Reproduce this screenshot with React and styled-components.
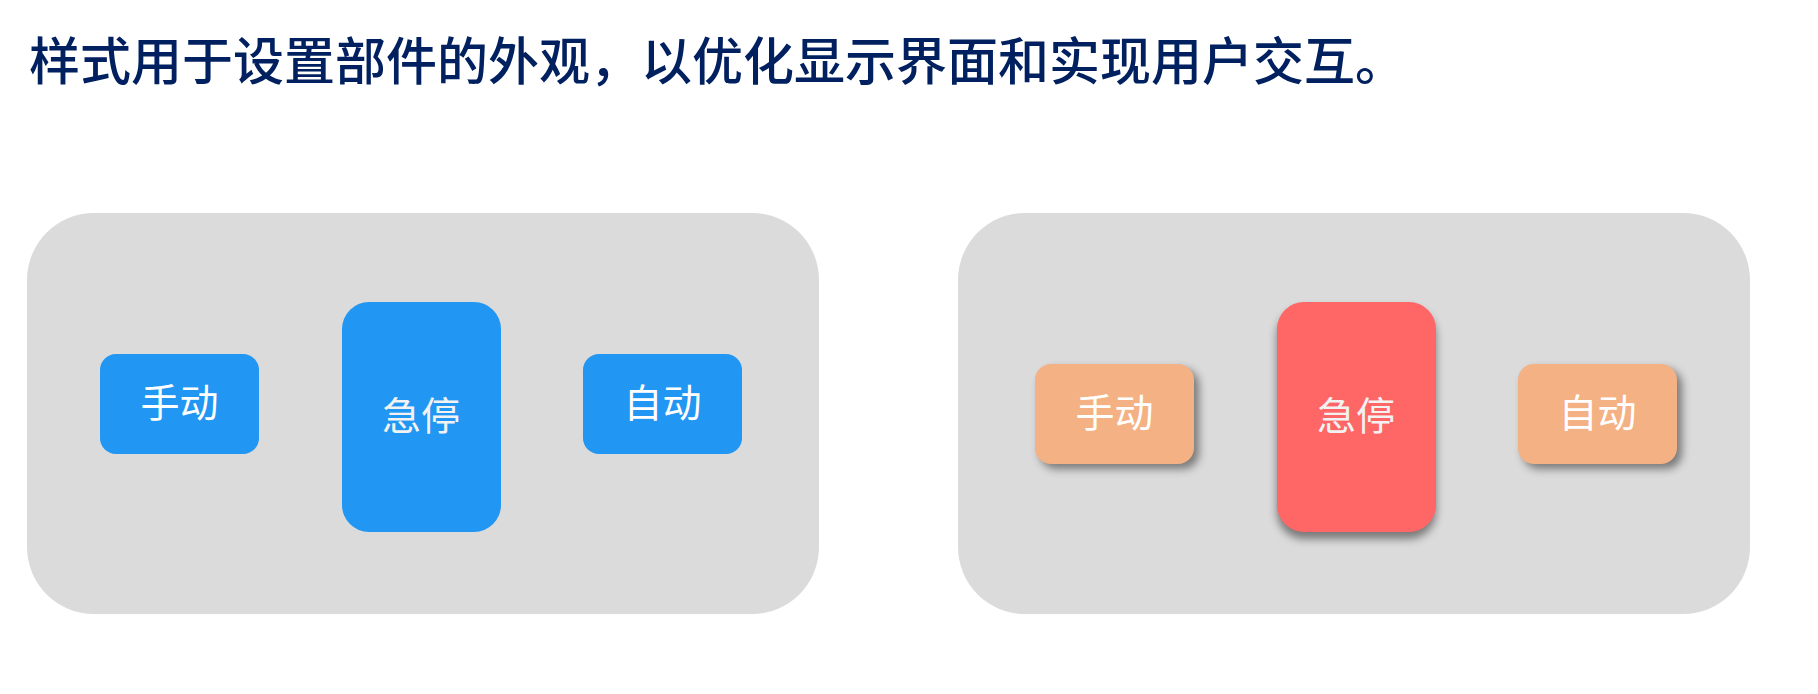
import React from "react";
import styled, { createGlobalStyle } from "styled-components";

const GlobalStyle = createGlobalStyle`
  * {
    box-sizing: border-box;
  }

  body {
    margin: 0;
    background: #ffffff;
    font-family: "Noto Sans CJK SC", sans-serif;
  }
`;

const Page = styled.main`
  padding: 24px 68px 80px 27px;
`;

const Title = styled.h1`
  margin: 0 0 121px;
  padding-left: 2px;
  color: #002060;
  font-size: 51px;
  font-weight: 500;
  line-height: 68px;
`;

const Panels = styled.div`
  display: grid;
  grid-template-columns: 1fr 1fr;
  gap: 139px;
`;

const Panel = styled.section`
  display: flex;
  justify-content: space-between;
  align-items: flex-start;
  padding: ${({ $inset }) => `89px ${150 - $inset}px 82px ${$inset}px`};
  border-radius: 67px;
  background: #dbdbdb;
`;

const Button = styled.button`
  width: 159px;
  height: 100px;
  margin: ${({ $top }) => $top}px 0 0;
  padding: 0 0 8px;
  border: 0;
  border-radius: 16px;
  background: ${({ $styled }) => ($styled ? "#f4b183" : "#2196f3")};
  box-shadow: ${({ $styled }) =>
    $styled ? "5px 5px 8px rgba(0, 0, 0, 0.45)" : "none"};
  color: #ffffff;
  font-family: inherit;
  font-size: 39px;
  line-height: 56px;
  cursor: pointer;
`;

const StopButton = styled(Button)`
  height: 230px;
  margin: 0;
  border-radius: 27px;
  background: ${({ $styled }) => ($styled ? "#ff6666" : "#2196f3")};
  box-shadow: ${({ $styled }) =>
    $styled ? "0 7px 8px rgba(0, 0, 0, 0.45)" : "none"};
  color: #f2f2f2;
`;

function ControlPanel({ inset, top, accent }) {
  return (
    <Panel $inset={inset}>
      <Button type="button" $top={top} $styled={accent}>手动</Button>
      <StopButton type="button" $styled={accent}>急停</StopButton>
      <Button type="button" $top={top} $styled={accent}>自动</Button>
    </Panel>
  );
}

export default function App() {
  return (
    <>
      <GlobalStyle />
      <Page>
        <Title>样式用于设置部件的外观，以优化显示界面和实现用户交互。</Title>
        <Panels>
          <ControlPanel inset={73} top={52} />
          <ControlPanel inset={77} top={62} accent />
        </Panels>
      </Page>
    </>
  );
}
